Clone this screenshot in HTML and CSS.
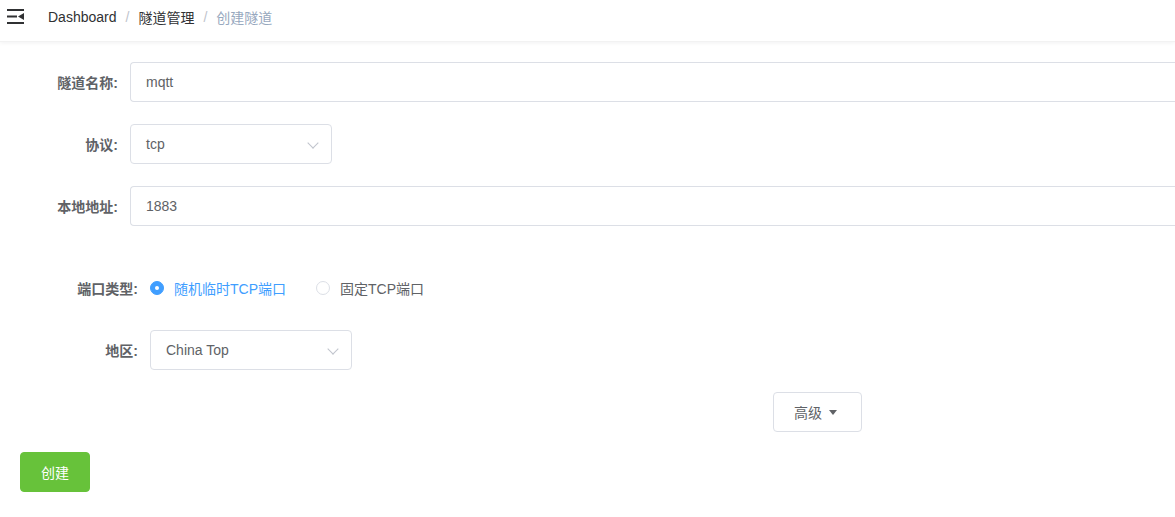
FILE: index.html
```html
<!DOCTYPE html>
<html lang="zh">
<head>
<meta charset="utf-8">
<title>创建隧道</title>
<link rel="stylesheet" href="styles.css">
</head>
<body>
<div class="navbar">
  <div class="hamburger">
    <svg width="17" height="15" viewBox="0 0 17 15">
      <rect x="0" y="0" width="17" height="2" fill="#303133"/>
      <rect x="0" y="6.5" width="10" height="2" fill="#303133"/>
      <polygon points="11,7.5 17,4 17,11" fill="#303133"/>
      <rect x="0" y="13" width="17" height="2" fill="#303133"/>
    </svg>
  </div>
  <div class="breadcrumb">
    <span class="crumb">Dashboard</span>
    <span class="sep">/</span>
    <span class="crumb">隧道管理</span>
    <span class="sep">/</span>
    <span class="crumb current">创建隧道</span>
  </div>
</div>
<div class="form">
  <div class="item">
    <label class="label w110">隧道名称:</label>
    <div class="input wide">mqtt</div>
  </div>
  <div class="item">
    <label class="label w110">协议:</label>
    <div class="input select">tcp<span class="chev"></span></div>
  </div>
  <div class="item">
    <label class="label w110">本地地址:</label>
    <div class="input wide">1883</div>
  </div>
  <div class="item gap-top">
    <label class="label w130">端口类型:</label>
    <div class="radios">
      <span class="radio checked"><span class="dot"></span><span class="rtext">随机临时TCP端口</span></span>
      <span class="radio"><span class="dot"></span><span class="rtext">固定TCP端口</span></span>
    </div>
  </div>
  <div class="item">
    <label class="label w130">地区:</label>
    <div class="input select">China Top<span class="chev"></span></div>
  </div>
  <div class="item adv-row">
    <button class="btn adv">高级<span class="caret"></span></button>
  </div>
  <div class="item last">
    <button class="btn primary">创建</button>
  </div>
</div>
</body>
</html>
```

FILE: styles.css
```css
html, body {
  margin: 0;
  padding: 0;
  overflow: hidden;
  background: #fff;
}
body {
  font-family: "Liberation Sans", "Noto Sans CJK SC", sans-serif;
  font-size: 14px;
  color: #606266;
}
.navbar {
  height: 42px;
  display: flex;
  align-items: center;
  box-shadow: 0 1px 4px rgba(0, 21, 41, 0.06);
  border-bottom: 1px solid #f2f2f2;
  box-sizing: border-box;
}
.hamburger {
  width: 48px;
  padding-left: 7px;
  box-sizing: border-box;
  display: flex;
  align-items: center;
  height: 34px;
  margin-top: -8px;
}
.breadcrumb {
  display: flex;
  align-items: center;
  height: 34px;
  margin-top: -8px;
  font-size: 14px;
}
.crumb { color: #303133; }
.crumb.current { color: #97a8be; }
.sep { color: #c0c4cc; margin: 0 9px; }

.form {
  padding: 20px 0 0 20px;
}
.item {
  display: flex;
  align-items: center;
  height: 40px;
  margin-bottom: 22px;
}
.item.gap-top { margin-top: 42px; }
.item.last { margin-bottom: 0; margin-top: -2px; }
.label {
  text-align: right;
  padding-right: 12px;
  box-sizing: border-box;
  font-weight: 700;
  color: #606266;
  flex: none;
}
.w110 { width: 110px; }
.w130 { width: 130px; }
.input {
  height: 40px;
  border: 1px solid #dcdfe6;
  border-radius: 4px;
  box-sizing: border-box;
  padding: 0 15px;
  display: flex;
  align-items: center;
  color: #606266;
  position: relative;
}
.input.wide {
  flex: 1;
  border-right: none;
  border-radius: 4px 0 0 4px;
}
.input.select { width: 202px; }
.chev {
  position: absolute;
  right: 14px;
  top: 14px;
  width: 7px;
  height: 7px;
  border-right: 1px solid #c0c4cc;
  border-bottom: 1px solid #c0c4cc;
  transform: rotate(45deg);
}
.radios { display: flex; align-items: center; }
.radio {
  display: inline-flex;
  align-items: center;
  margin-right: 30px;
  color: #606266;
}
.radio.checked { color: #409eff; }
.dot {
  width: 14px;
  height: 14px;
  border: 1px solid #dcdfe6;
  border-radius: 50%;
  box-sizing: border-box;
  position: relative;
}
.radio.checked .dot {
  background: #409eff;
  border-color: #409eff;
}
.radio.checked .dot::after {
  content: "";
  position: absolute;
  width: 4px;
  height: 4px;
  background: #fff;
  border-radius: 50%;
  left: 4px;
  top: 4px;
}
.rtext { margin-left: 10px; }
.btn {
  height: 40px;
  border-radius: 4px;
  font-family: inherit;
  font-size: 14px;
  padding: 0 20px;
  box-sizing: border-box;
  cursor: pointer;
  display: inline-flex;
  align-items: center;
}
.adv-row { padding-left: 753px; }
.adv {
  width: 89px;
  background: #fff;
  border: 1px solid #dcdfe6;
  color: #606266;
}
.caret {
  width: 0;
  height: 0;
  border-left: 4px solid transparent;
  border-right: 4px solid transparent;
  border-top: 5px solid #606266;
  margin-left: 7px;
  margin-top: 1px;
}
.primary {
  width: 70px;
  background: #67c23a;
  border: 1px solid #67c23a;
  color: #fff;
}
```
